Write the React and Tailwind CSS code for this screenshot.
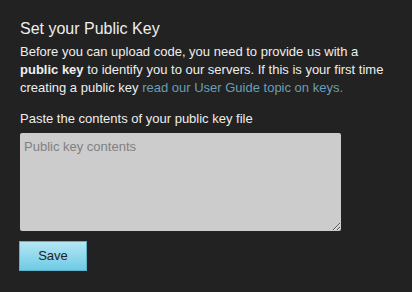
// Public key setup form — dark panel with heading, explanation,
// textarea for the key and a save button.

export default function App() {
  return (
    <div
      className="w-[412px] h-[292px] bg-[#222222] px-5 pt-[19px] text-[#eeeeee]"
      style={{ fontFamily: '"Liberation Sans", Arial, sans-serif' }}
    >
      <h1 className="text-[16px] leading-[20px] text-[#eeeeee] mb-[4px]">
        Set your Public Key
      </h1>
      <p className="text-[13px] leading-[18px] text-[#eeeeee]">
        Before you can upload code, you need to provide us with a{" "}
        <strong className="font-bold">public key</strong> to identify you to our
        servers. If this is your first time creating a public key{" "}
        <a href="#" className="text-[#6a9fb5]">
          read our User Guide topic on keys.
        </a>
      </p>
      <label className="block mt-[13px] text-[13px] leading-[18px] text-[#eeeeee]">
        Paste the contents of your public key file
      </label>
      <textarea
        placeholder="Public key contents"
        className="block mt-[5px] w-[321px] h-[98px] rounded-[2px] bg-[#cccccc] px-[4px] py-[5px] text-[13px] leading-[18px] text-[#333] placeholder:text-[#808080] outline-none"
        style={{ fontFamily: '"Liberation Sans", Arial, sans-serif' }}
      />
      <button
        type="button"
        className="mt-[10px] -ml-px w-[68px] h-[30px] border border-[#5fb3c9] bg-gradient-to-b from-[#b4e6f3] to-[#6ccbe5] text-[13px] text-[#222222]"
      >
        Save
      </button>
    </div>
  );
}
